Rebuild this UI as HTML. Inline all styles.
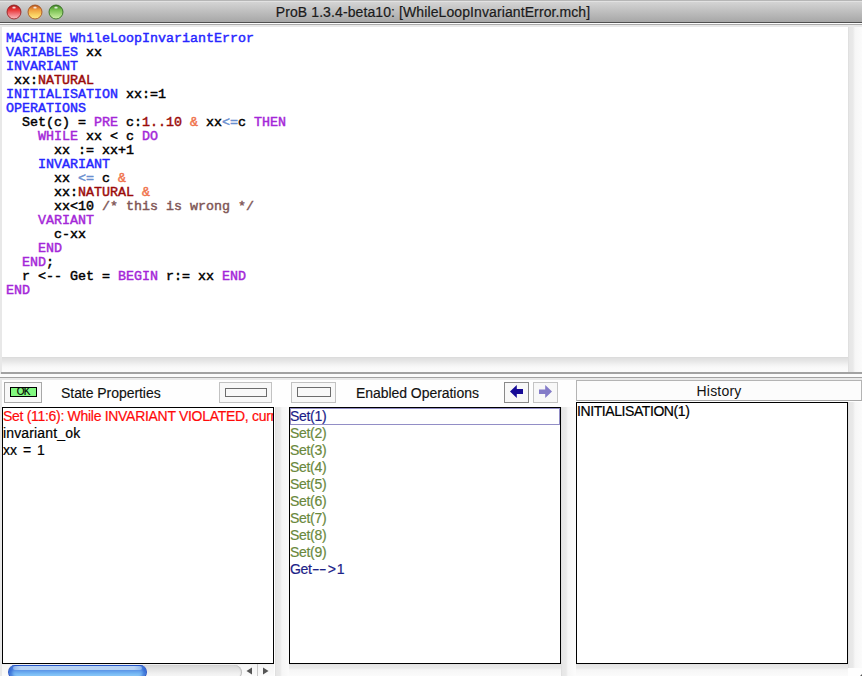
<!DOCTYPE html>
<html><head><meta charset="utf-8">
<style>
*{margin:0;padding:0;box-sizing:border-box}
html,body{width:862px;height:676px;overflow:hidden;background:#fefefe;font-family:"Liberation Sans",sans-serif}
.a{position:absolute}
#title{left:0;top:0;width:862px;height:22px;background:linear-gradient(#b6b6b6 0px,#b6b6b6 1px,#e2e2e2 1px,#e2e2e2 2px,#d4d4d4 2px,#a7a7a7 22px)}
#ttext{left:2px;top:4px;width:862px;text-align:center;font-size:14px;letter-spacing:0.1px;-webkit-text-stroke:0.2px #1a1a1a;color:#1a1a1a;white-space:nowrap}
.tl{top:5px;width:14px;height:14px;border-radius:50%}
pre{position:absolute;left:4px;top:5px;font-family:"Liberation Mono",monospace;font-weight:normal;-webkit-text-stroke:0.45px;font-size:13.33px;line-height:14px;color:#000}
.k{color:#2626ff}.p{color:#a426d8}.r{color:#9b0a0a}.o{color:#f0724b}.c{color:#805656}.b{color:#6a8fd0}
.btn{border:1px solid #b6b6b6;background:#f8f8f8}
.inner{position:absolute;border:1px solid #6c6c6c;background:#f8f8f8}
.list{background:#fff;border:1px solid #000;overflow:hidden}
.hdr{font-size:14px;letter-spacing:-0.05px;-webkit-text-stroke:0.15px;color:#111;white-space:nowrap}
.row{position:absolute;left:0;font-size:14px;letter-spacing:-0.3px;-webkit-text-stroke:0.2px;height:17px;line-height:17px;white-space:nowrap}
.gs{background:linear-gradient(90deg,#d9d9d9 0,#e6e6e6 1px,#e9e9e9 5px,#f6f6f6 7px,#fbfbfb 14px)}
.gh{background:linear-gradient(#dcdcdc 0,#e6e6e6 1px,#e9e9e9 4px,#f6f6f6 6px,#fbfbfb 12px)}
.hy{display:inline-block;transform:scaleX(1.6);transform-origin:0 50%;margin-right:3.2px}
</style></head><body>
<div id="title" class="a"></div>
<div class="a" style="left:0;top:22px;width:862px;height:1px;background:#4f4f4f"></div>
<svg class="a" style="left:0;top:0" width="70" height="22">
<defs>
<linearGradient id="gr" x1="0" y1="0" x2="0" y2="1"><stop offset="0" stop-color="#a81818"/><stop offset="0.35" stop-color="#e93535"/><stop offset="0.6" stop-color="#f06b70"/><stop offset="1" stop-color="#fbc0c4"/></linearGradient>
<linearGradient id="go" x1="0" y1="0" x2="0" y2="1"><stop offset="0" stop-color="#b8501a"/><stop offset="0.35" stop-color="#f0a040"/><stop offset="0.7" stop-color="#fad060"/><stop offset="1" stop-color="#fee888"/></linearGradient>
<linearGradient id="gg" x1="0" y1="0" x2="0" y2="1"><stop offset="0" stop-color="#3f7f24"/><stop offset="0.35" stop-color="#78c050"/><stop offset="0.7" stop-color="#a8dc80"/><stop offset="1" stop-color="#d0f0a8"/></linearGradient>
<radialGradient id="hl" cx="0.5" cy="0.5" r="0.5"><stop offset="0" stop-color="#fff" stop-opacity="1"/><stop offset="1" stop-color="#fff" stop-opacity="0"/></radialGradient>
</defs>
<circle cx="14" cy="12" r="7.6" fill="#dcdcdc" opacity="0.5"/>
<circle cx="14" cy="12" r="7" fill="url(#gr)" stroke="#8e1f1f" stroke-width="0.9"/>
<ellipse cx="14" cy="7.6" rx="2.6" ry="1.6" fill="url(#hl)"/>
<circle cx="35" cy="12" r="7.6" fill="#dcdcdc" opacity="0.5"/>
<circle cx="35" cy="12" r="7" fill="url(#go)" stroke="#a0501e" stroke-width="0.9"/>
<ellipse cx="35" cy="7.6" rx="2.6" ry="1.6" fill="url(#hl)"/>
<circle cx="56" cy="12" r="7.6" fill="#dcdcdc" opacity="0.5"/>
<circle cx="56" cy="12" r="7" fill="url(#gg)" stroke="#2f6a1e" stroke-width="0.9"/>
<ellipse cx="56" cy="7.6" rx="2.6" ry="1.6" fill="url(#hl)"/>
</svg>
<div id="ttext" class="a">ProB 1.3.4-beta10: [WhileLoopInvariantError.mch]</div>

<!-- editor -->
<div class="a" style="left:0;top:23px;width:862px;height:1px;background:#fdfdfd"></div>
<div class="a" style="left:0;top:24px;width:862px;height:1px;background:#aaaaaa"></div>
<div class="a" style="left:0;top:25px;width:862px;height:2px;background:#eaeaea"></div>
<div class="a" style="left:0;top:27px;width:2px;height:345px;background:#e8e8e8"></div>
<div class="a" style="left:2px;top:27px;width:846px;height:330px;background:#fff"><pre><span class="k">MACHINE WhileLoopInvariantError</span>
<span class="k">VARIABLES</span> xx
<span class="k">INVARIANT</span>
 xx:<span class="r">NATURAL</span>
<span class="k">INITIALISATION</span> xx:=1
<span class="k">OPERATIONS</span>
  Set(c) = <span class="p">PRE</span> c:<span class="r">1..10</span> <span class="o">&amp;</span> xx<span class="b">&lt;=</span>c <span class="p">THEN</span>
    <span class="p">WHILE</span> xx &lt; c <span class="p">DO</span>
      xx := xx+1
    <span class="k">INVARIANT</span>
      xx <span class="b">&lt;=</span> c <span class="o">&amp;</span>
      xx:<span class="r">NATURAL</span> <span class="o">&amp;</span>
      xx&lt;10 <span class="c">/* this is wrong */</span>
    <span class="p">VARIANT</span>
      c-xx
    <span class="p">END</span>
  <span class="p">END</span>;
  r &lt;-- Get = <span class="p">BEGIN</span> r:= xx <span class="p">END</span>
<span class="p">END</span></pre></div>
<div class="a gs" style="left:848px;top:27px;width:14px;height:345px"></div>
<div class="a" style="left:2px;top:357px;width:846px;height:15px;background:linear-gradient(#d8d8d8 0,#e0e0e0 1px,#e6e6e6 4px,#f0f0f0 7px,#f8f8f8 10px,#fcfcfc 15px)"></div>

<!-- divider -->
<div class="a" style="left:1px;top:372px;width:861px;height:2px;background:#a2a2a2"></div><div class="a" style="left:0;top:372px;width:1px;height:2px;background:#e6e6e6"></div>
<div class="a" style="left:0;top:374px;width:862px;height:3px;background:#fbfbfb"></div>
<div class="a" style="left:0;top:377px;width:862px;height:1px;background:#a2a2a2"></div>
<div class="a" style="left:0;top:378px;width:862px;height:2px;background:#e9e9e9"></div>
<div class="a" style="left:0;top:380px;width:2px;height:296px;background:#e8e8e8"></div>

<!-- left column -->
<div class="a btn" style="left:4px;top:382px;width:38px;height:21px;border-color:#a8a8a8"></div>
<div class="a" style="left:10px;top:387px;width:27px;height:10px;background:#82f880;border:1px solid #000;font-size:10px;line-height:8px;text-align:center;color:#000;letter-spacing:-0.6px;-webkit-text-stroke:0.15px #000;text-indent:-0.5px">OK</div>
<div class="a hdr" style="left:61px;top:385px">State Properties</div>
<div class="a btn" style="left:219px;top:382px;width:53px;height:21px;border-color:#c2c2c2"><div class="inner" style="left:5px;top:5px;width:42px;height:9px"></div></div>
<div class="a list" style="left:2px;top:407px;width:272px;height:257px">
 <div class="row" style="top:0;color:#ff0a0a">Set (11:6): While INVARIANT VIOLATED, current</div>
 <div class="row" style="top:17px;color:#000;letter-spacing:0.15px">invariant_ok</div>
 <div class="row" style="top:34px;color:#000;letter-spacing:0;word-spacing:2px">xx = 1</div>
</div>
<div class="a gs" style="left:275px;top:407px;width:14px;height:269px"></div>
<div class="a" style="left:2px;top:664px;width:272px;height:12px;background:linear-gradient(#f0f0f0 0,#f0f0f0 1px,#f4f4f4 1px,#fbfbfb 12px)"></div>
<div class="a" style="left:20px;top:665px;width:222px;height:15px;border-radius:0 7.5px 7.5px 0;background:linear-gradient(#d4d4d4,#e4e4e4 30%,#f2f2f2 60%,#fbfbfb);box-shadow:inset -1px 0 1px #b8b8b8"></div>
<div class="a" style="left:8px;top:665px;width:139px;height:14px;border-radius:7px;background:linear-gradient(#2a58c8 0,#2a58c8 1px,#6a9ee8 1px,#5b94e6 5px,#70b2f2 8px,#98d6fb 12px);border:1px solid #2b55c4;border-top:0;box-shadow:inset 3px 0 3px rgba(30,80,200,.6),inset -3px 0 3px rgba(30,80,200,.6)"></div>
<div class="a" style="left:13px;top:666px;width:129px;height:4px;border-radius:2px;background:linear-gradient(90deg,rgba(190,215,245,.5),rgba(190,215,245,.95) 8px,rgba(190,215,245,.95) 121px,rgba(190,215,245,.5))"></div>
<svg class="a" style="left:240px;top:664px" width="34" height="12"><path d="M7 4L13 4L13 12L7 12" fill="none"/><path d="M6.5 7L12 3.5V10.5Z" fill="#555"/><path d="M23 3.5L28.5 7L23 10.5Z" fill="#555"/><rect x="17" y="0" width="1" height="12" fill="#c8c8c8"/></svg>

<!-- middle column -->
<div class="a btn" style="left:291px;top:382px;width:45px;height:21px;border-color:#c2c2c2"><div class="inner" style="left:5px;top:4px;width:34px;height:10px"></div></div>
<div class="a hdr" style="left:356px;top:385px">Enabled Operations</div>
<div class="a btn" style="left:504px;top:382px;width:25px;height:21px;border-color:#8a8a8a"></div>
<div class="a btn" style="left:533px;top:382px;width:25px;height:21px;border-color:#c4c4c4"></div>
<svg class="a" style="left:510px;top:385px" width="14" height="13" viewBox="0 0 14 13"><path d="M0 6.5L6.8 0V4H13V9H6.8V13Z" fill="#160a96"/></svg>
<svg class="a" style="left:538px;top:385px" width="14" height="13" viewBox="0 0 14 13"><path d="M14 6.5L7.2 0V4.5H1V9H7.2V13Z" fill="#837bc8"/></svg>
<div class="a list" style="left:289px;top:407px;width:272px;height:257px">
 <div class="a" style="left:0;top:0;width:270px;height:17px;border:1px solid #928ec6"></div>
 <div class="row" style="top:0;color:#1c1c88">Set(1)</div>
 <div class="row" style="top:17px;color:#6a883c">Set(2)</div>
 <div class="row" style="top:34px;color:#6a883c">Set(3)</div>
 <div class="row" style="top:51px;color:#6a883c">Set(4)</div>
 <div class="row" style="top:68px;color:#6a883c">Set(5)</div>
 <div class="row" style="top:85px;color:#6a883c">Set(6)</div>
 <div class="row" style="top:102px;color:#6a883c">Set(7)</div>
 <div class="row" style="top:119px;color:#6a883c">Set(8)</div>
 <div class="row" style="top:136px;color:#6a883c">Set(9)</div>
 <div class="row" style="top:153px;color:#1c2288">Get<span class="hy">-</span><span class="hy">-</span><span style="margin-left:1px">&gt;</span><span style="margin-left:1px">1</span></div>
</div>
<div class="a gh" style="left:289px;top:664px;width:272px;height:12px"></div>
<div class="a gs" style="left:561px;top:407px;width:15px;height:269px"></div>

<!-- right column -->
<div class="a" style="left:576px;top:380px;width:286px;height:21px;background:#fcfcfc;border:1px solid #b4b4b4;border-bottom-color:#a6a6a6;font-size:14px;text-align:center;line-height:19px;padding-top:1px;letter-spacing:0.2px;color:#111">History</div>
<div class="a list" style="left:576px;top:402px;width:272px;height:262px">
 <div class="row" style="top:0;left:0;letter-spacing:-0.42px;color:#000">INITIALISATION(1)</div>
</div>
<div class="a gh" style="left:576px;top:664px;width:272px;height:12px"></div>
<div class="a gs" style="left:848px;top:402px;width:14px;height:266px"></div>
<div class="a" style="left:861px;top:675px;width:1px;height:1px;background:#555"></div>
<div class="a" style="left:860px;top:675px;width:1px;height:1px;background:#b0b0b0"></div>
<div class="a" style="left:861px;top:674px;width:1px;height:1px;background:#b0b0b0"></div>
</body></html>
